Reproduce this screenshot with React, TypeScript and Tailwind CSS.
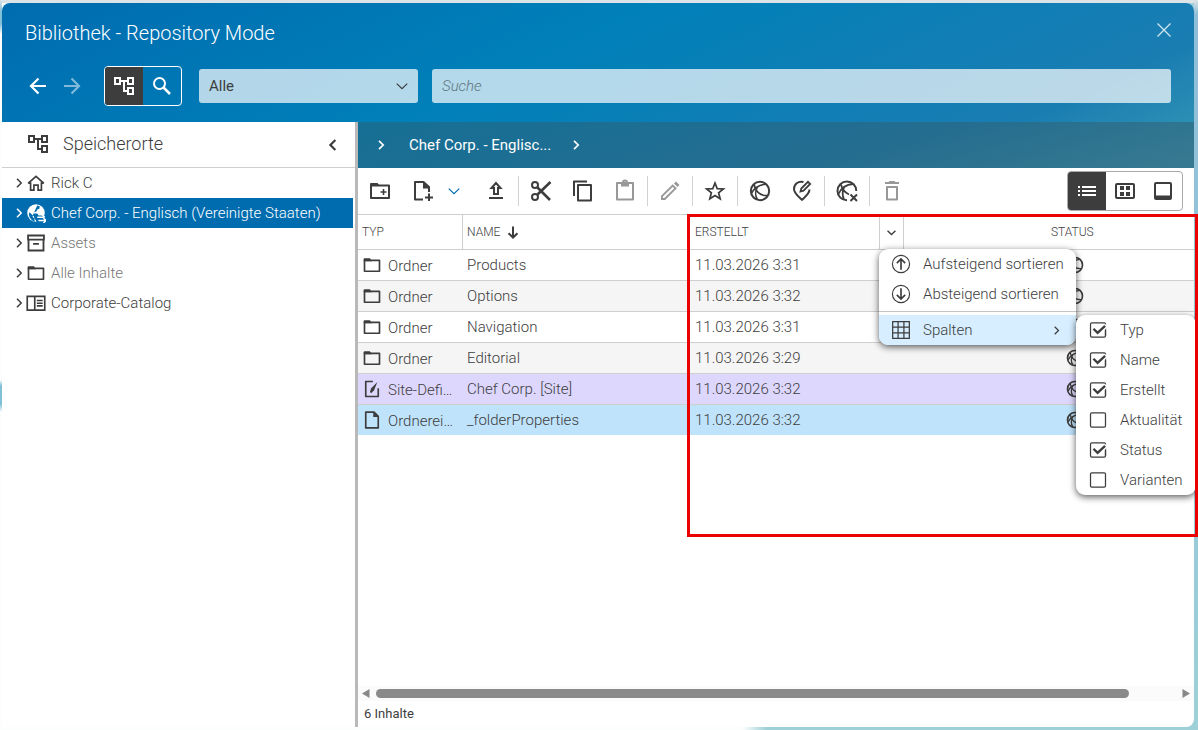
import React from "react";

type P = { className?: string };

const Svg = ({ className = "", size = 24, children }: P & { size?: number; children: React.ReactNode }) => (
  <svg width={size} height={size} viewBox="0 0 24 24" fill="none" stroke="currentColor" strokeWidth="2" className={"shrink-0 " + className}>
    {children}
  </svg>
);

const Tree = ({ className }: P) => (
  <Svg className={className}>
    <path d="M3 4h5v6H3zM16 4h5v6h-5zM16 14h5v6h-5zM8 7h8M12 7v10h4" />
  </Svg>
);
const Chevron = ({ className, size = 8, dir = "right", w = 1.8 }: P & { size?: number; dir?: "right" | "left" | "down"; w?: number }) => (
  <svg width={size} height={size} viewBox="0 0 10 10" fill="none" stroke="currentColor" strokeWidth={w} className={"shrink-0 " + (className ?? "")}>
    <path d={dir === "right" ? "M3 .8 7.2 5 3 9.2" : dir === "left" ? "M7 .8 2.8 5 7 9.2" : "M.6 3 5 7.2 9.4 3"} />
  </svg>
);
const Folder = ({ className, size }: P & { size?: number }) => (
  <Svg className={className} size={size}>
    <path d="M3 6.5h18v13H3z" strokeLinejoin="round" />
    <path d="M2 7.500V5a1 1 0 0 1 1-1h6.500l2.500 3.500z" fill="currentColor" stroke="none" />
  </Svg>
);
const Globe = ({ className, size }: P & { size?: number }) => (
  <Svg className={className} size={size}>
    <circle cx="12" cy="12" r="10" strokeWidth="2.200" />
    <path d="M18.500 4.500C11 5 5.500 9 2.500 15M5.500 4.500C6.500 12 12 17.500 20.500 17M9 8C7 11.500 6.500 17 9 21" strokeWidth="1.800" />
  </Svg>
);

const Divider = () => <span className="h-[30px] w-px bg-[#d2d2d2]" />;

function Header() {
  return (
    <header className="h-[119px] shrink-0 bg-[linear-gradient(155deg,#006cb0_0%,#0080b9_45%,#1a7db2_88%,#2c8fb3_100%)] text-white">
      <div className="flex h-[60px] items-center justify-between pr-[23px] pl-[23px]">
        <h1 className="text-[20px] font-light">Bibliothek - Repository Mode</h1>
        <svg width="14" height="14" viewBox="0 0 14 14" stroke="currentColor" strokeWidth="1.300" className="-mt-1.5 opacity-80">
          <path d="M.5.5l13 13M13.500.5l-13 13" />
        </svg>
      </div>
      <div className="flex h-[46px] items-center pl-[24px]">
        <Svg><path d="M20 12H6M12.500 4.500 5 12l7.500 7.500" strokeWidth="2.200" /></Svg>
        <Svg className="ml-[10px] opacity-50"><path d="M4 12h14M11.500 4.500 19 12l-7.500 7.500" strokeWidth="2.200" /></Svg>
        <div className="ml-[20px] flex h-10 w-[78px] overflow-hidden rounded border border-white">
          <span className="flex w-[38px] items-center justify-center bg-[#3d3d3d]"><Tree /></span>
          <span className="flex flex-1 items-center justify-center pr-px">
            <Svg><circle cx="9.500" cy="9.500" r="5.500" /><path d="m13.500 13.500 6.500 6.500" strokeWidth="2.500" /></Svg>
          </span>
        </div>
        <div className="ml-[17px] flex h-[34px] w-[219px] items-center justify-between rounded-[3px] bg-white/70 pr-2.5 pl-2.5 text-[15px] text-[#3d3d3d]">
          <span>Alle</span>
          <Chevron dir="down" size={12} w={1} />
        </div>
        <div className="ml-[14px] flex h-[34px] w-[739px] items-center rounded-[3px] bg-white/70 pl-2.5 text-[15px] font-light text-[#5f7480] italic">Suche</div>
      </div>
    </header>
  );
}

const tree = [
  { label: "Rick C", icon: "home", muted: false },
  { label: "Chef Corp. - Englisch (Vereinigte Staaten)", icon: "site", muted: false },
  { label: "Assets", icon: "box", muted: true },
  { label: "Alle Inhalte", icon: "folder", muted: true },
  { label: "Corporate-Catalog", icon: "catalog", muted: false },
];

function TreeIcon({ name }: { name: string }) {
  if (name === "folder") return <Folder size={20} />;
  if (name === "home")
    return <Svg size={20}><path d="M2.500 12.500 12 4l9.500 8.500M5.500 11v9.500h4v-6h5v6h4V11" /></Svg>;
  if (name === "box")
    return <Svg size={20}><path d="M3 8v13h18V8M2.500 3h19v5h-19zM8.500 13h7" strokeWidth="2.200" /></Svg>;
  if (name === "catalog")
    return <Svg size={20}><path d="M1.500 4h21v16.500h-21zM10.500 4V20M13 9h7M13 12.300h7M13 15.500h7" /></Svg>;
  return (
    <Svg size={20}>
      <circle cx="12" cy="12" r="10.500" fill="currentColor" stroke="none" />
      <path d="M13.500 3l3 .8-.5 3-2.500 1-1 2.500-3 .8-.5 1.400h4.500l1.500 2.500H24V24H13l-1-3-2-2.500-.5-2.500-5.500-5-.5 3 1 3.500 3 3.500 3 1.500-.5-3.500-2-2.500V15z" fill="#006cb0" stroke="none" />
      <path d="M13.500 17H22M19.500 14l3 3M24 21h-9M21 18l3 3-3 3" strokeWidth="1.700" />
    </Svg>
  );
}

function Sidebar() {
  return (
    <aside className="flex w-[353px] shrink-0 flex-col text-[#3d3d3d]">
      <div className="flex h-[46px] items-center border-b border-[#cfcfcf] pr-[16px] pl-[24px]">
        <Tree className="-mt-0.5" />
        <span className="-mt-0.5 ml-[13px] text-[18px] font-light">Speicherorte</span>
        <Chevron dir="left" size={12} w={1.8} className="ml-auto" />
      </div>
      <ul>
        {tree.map((t, i) => (
          <li key={t.label} className={"flex h-[30px] w-[351px] items-center pl-[12px] text-[15px] font-light whitespace-nowrap " + (i === 1 ? "bg-[#006cb0] text-white" : "")}>
            <Chevron size={10} w={1.5} />
            <span className="flex w-[24px] justify-center"><TreeIcon name={t.icon} /></span>
            <span className={"ml-[3px] " + (t.muted ? "text-[#777]" : "")}>{t.label}</span>
          </li>
        ))}
      </ul>
    </aside>
  );
}

function Toolbar() {
  return (
    <div className="flex h-[47px] shrink-0 items-center border-b border-[#cfcfcf] text-[#3d3d3d]">
      <Svg className="ml-[10px]">
        <path d="M3 6.500h18v12.500H3z" strokeLinejoin="round" /><path d="M2 7V5a1 1 0 0 1 1-1h6.500L12 7z" fill="currentColor" stroke="none" />
        <path d="M12.500 13h6M15.500 10v6" strokeWidth="1.600" />
      </Svg>
      <Svg className="ml-[19px]">
        <path d="M12 20.500H4V3h8.500L18 8V13M18 14.500v7.500M14 18.500h8" strokeLinejoin="round" /><path d="M12 3l6.500 6.500H12z" fill="currentColor" stroke="none" />
      </Svg>
      <Chevron dir="down" size={12} w={1} className="ml-[13px] text-[#006cb0]" />
      <Svg className="ml-[24px]"><path d="M5 19h14M12 4 7.500 9H10v6h4V9h2.500z" /></Svg>
      <span className="w-[10px]" /><Divider />
      <Svg className="ml-[10px]">
        <circle cx="6" cy="6" r="3" /><circle cx="6" cy="18" r="3" />
        <path d="M8.500 8.500 21 21M8.500 15.500 21.500 3" strokeWidth="2.600" />
      </Svg>
      <Svg className="ml-[18px]"><path d="M7 6h13v15.500H7zM3 17V2.500h13" strokeLinejoin="round" /></Svg>
      <Svg className="ml-[18px] text-[#989898]">
        <path d="M4 4h16v16.500H4z" strokeLinejoin="round" /><path d="M8 3.500h8v4H8z" fill="currentColor" stroke="none" /><path d="M10 3.500a2 2 0 0 1 4 0" />
      </Svg>
      <span className="w-[10px]" /><Divider />
      <Svg className="ml-[10px] text-[#989898]"><path d="M4 17.200 14.700 6.500l2.800 2.800L6.800 20H4z" strokeWidth="1.900" /><path d="m16 4.500 2-2 3.500 3.500-2 2z" fill="currentColor" stroke="none" /></Svg>
      <span className="w-[10px]" /><Divider />
      <Svg className="ml-[10px]"><path d="m12 4 2.200 5.600 6.200.4-4.800 3.800 1.600 6L12 16.500l-5.200 3.300 1.600-6L3.600 10l6.200-.4z" strokeWidth="1.700" /></Svg>
      <span className="w-[10px]" /><Divider />
      <Globe className="ml-[11px]" size={22} />
      <Svg className="ml-[19px]">
        <path d="M13.500 3C8 1.500 4 5.500 4 10c0 4.500 4 7 8 10.800 4-3.800 7.500-6.300 7.500-10.300" /><path d="m10.500 12.500.8-3L18 2.800l2.200 2.200-6.700 6.700z" strokeWidth="1.800" />
      </Svg>
      <span className="w-[10px]" /><Divider />
      <Svg className="ml-[10px]">
        <path d="M12 21.300A9.400 9.400 0 1 1 21.300 12" /><path d="M18 5C11 5.500 6 9.500 3.500 15M6 5.500C7 10 9 13 14 15.500M9 8.500C7.500 11.500 7 17 9 20" strokeWidth="1.800" /><path d="m15.500 15.500 6.500 6.500M22 15.500 15.500 22" />
      </Svg>
      <span className="w-[10px]" /><Divider />
      <Svg className="ml-[10px] text-[#989898]"><path d="M5 4h14M9 4l1-1h4l1 1M7 8h10v12.500H7z" strokeLinejoin="round" /></Svg>
      <div className="mr-[11px] ml-auto flex h-10 w-[116px] overflow-hidden rounded border border-[#a9a9a9]">
        <span className="flex w-[38px] items-center justify-center bg-[#3d3d3d] text-white">
          <Svg><path d="M3 8h2M7 8h14M3 12h2M7 12h14M3 16h2M7 16h14" /></Svg>
        </span>
        <span className="flex w-[38px] items-center justify-center">
          <Svg><rect x="3" y="5" width="18" height="14" rx="1" /><path d="M7 7h4v4H7zM13 7h4v4h-4zM7 13h4v4H7zM13 13h4v4h-4z" fill="currentColor" stroke="none" /></Svg>
        </span>
        <span className="flex w-[38px] items-center justify-center">
          <Svg><rect x="4" y="4" width="16" height="16" rx="1" /><path d="M4 16.500h16V20H4z" fill="currentColor" stroke="none" /></Svg>
        </span>
      </div>
    </div>
  );
}

const rows = [
  { type: "Ordner", name: "Products", date: "11.03.2026 3:31", bg: "bg-white" },
  { type: "Ordner", name: "Options", date: "11.03.2026 3:32", bg: "bg-[#f5f5f5]" },
  { type: "Ordner", name: "Navigation", date: "11.03.2026 3:31", bg: "bg-white" },
  { type: "Ordner", name: "Editorial", date: "11.03.2026 3:29", bg: "bg-[#f5f5f5]" },
  { type: "Site-Defi…", name: "Chef Corp. [Site]", date: "11.03.2026 3:32", bg: "bg-[#ded7fd]" },
  { type: "Ordnerei…", name: "_folderProperties", date: "11.03.2026 3:32", bg: "bg-[#bfe3fb]" },
];

function RowIcon({ i }: { i: number }) {
  if (i < 4) return <Folder size={20} />;
  if (i === 4)
    return <Svg size={20}><path d="M13 3H4.500v18h15V11" strokeLinejoin="round" /><path d="m18.500 3.500-4 10-3.500 3.500-1.500-1.500 1.500-4.500z" fill="currentColor" stroke="none" /></Svg>;
  return <Svg size={20}><path d="M4.500 2.500h10l5 5v14h-15z" strokeLinejoin="round" /><path d="M13.500 2 20 8.500h-6.500z" fill="currentColor" stroke="none" /></Svg>;
}

function Table() {
  return (
    <div className="flex-1 text-[#3d3d3d]">
      <div className="flex h-[35px] items-center border-b border-[#cfcfcf] text-[12px] font-light">
        <span className="flex h-full w-[105px] items-center border-r border-[#cfcfcf] pl-1 ">TYP</span>
        <span className="flex h-full w-[225px] items-center pl-1">NAME
          <svg width="12" height="13" viewBox="0 0 12 13" fill="none" stroke="currentColor" strokeWidth="2" className="ml-[7px]"><path d="M6 .5v11M1.500 7.200 6 11.500l4.500-4.300" /></svg>
        </span>
        <span className="flex h-full w-[192px] items-center border-r border-[#cfcfcf] pl-[7px]">ERSTELLT</span>
        <span className="flex h-full w-[24px] items-center justify-center border-r border-[#cfcfcf]"><Chevron dir="down" size={9} w={1.500} /></span>
        <span className="flex-1 pl-[147px]">STATUS</span>
      </div>
      {rows.map((r, i) => (
        <div key={r.name} className={"flex items-center text-[15px] font-light whitespace-nowrap " + r.bg + (i < 5 ? " h-[31px] border-b border-[#cfcfcf]" : " h-[30px]")}>
          <span className="flex w-[105px] items-center pl-1"><RowIcon i={i} /><span className="relative top-px ml-[6px]">{r.type}</span></span>
          <span className="w-[228px] pl-1">{r.name}</span>
          <span className="w-[375px] pl-1">{r.date}</span>
          <Globe size={18} />
        </div>
      ))}
    </div>
  );
}

function SortIcon({ down }: { down?: boolean }) {
  return <Svg size={20}><circle cx="12" cy="12" r="10.300" strokeWidth="1.400" /><path d={down ? "M12 5v13M7 13l5 5 5-5" : "M12 19V6M7 11l5-5 5 5"} /></Svg>;
}

function Menus() {
  const options = [["Typ", true], ["Name", true], ["Erstellt", true], ["Aktualität", false], ["Status", true], ["Varianten", false]] as const;
  const shadow = "shadow-[0_2px_7px_rgba(0,0,0,0.65)]";
  return (
    <>
      <div className={"absolute top-[249px] left-[879px] h-[96px] w-[197px] overflow-hidden rounded-[9px] bg-white text-[15px] font-light text-[#3d3d3d] " + shadow}>
        <div className="flex h-[30px] items-center gap-3 pl-3"><SortIcon /><span>Aufsteigend sortieren</span></div>
        <div className="flex h-[30px] items-center gap-3 pl-3"><SortIcon down /><span>Absteigend sortieren</span></div>
        <div className="mt-[2px] h-px bg-[#c4c4c4]" />
        <div className="mt-[3px] flex h-[30px] items-center gap-3 bg-[#d6eeff] pr-[15px] pl-3">
          <Svg size={20}><path d="M2 2h20v20H2zM8.500 2v20M15.500 2v20M2 8.500h20M2 15.500h20" strokeWidth="1.500" /></Svg>
          <span>Spalten</span><Chevron size={9} w={1.400} className="ml-auto" />
        </div>
      </div>
      <div className={"absolute top-[315px] left-[1076px] w-[120px] rounded-[9px] bg-white text-[15px] font-light text-[#3d3d3d] " + shadow}>
        {options.map(([label, on]) => (
          <div key={label} className="flex h-[30px] items-center gap-3 pl-3">
            <Svg size={20}>
              <rect x="3" y="3.500" width="18" height="17" rx="1.500" strokeWidth="1.500" />
              {on && <><path d="M16 13 22 6" stroke="white" strokeWidth="5" /><path d="m6.500 10.500 5 5L20.500 7" strokeWidth="2.800" /><path d="M21 12v7" strokeWidth="1.500" /></>}
            </Svg>
            <span>{label}</span>
          </div>
        ))}
      </div>
      <div className="pointer-events-none absolute top-[214px] left-[687px] h-[323px] w-[511px] border-[3px] border-[#eb0000]" />
    </>
  );
}

export default function App() {
  return (
    <div className="relative flex h-[730px] w-[1198px] overflow-hidden bg-[linear-gradient(90deg,#fcfdfd_62%,#9ed0d7_64%)] font-['Roboto',sans-serif]">
      <div className="h-full w-full bg-[linear-gradient(#dde4e8_3px,transparent_3px)]">
        <div className="h-full w-full bg-[linear-gradient(#dde4e8,#7fbfd8_12px,#7fbfd8_24px,#fcfdfd_34px,#fcfdfd_380px,#7fbfd8_386px,#7fbfd8_404px,#fcfdfd_412px)] bg-[length:2px_100%] bg-no-repeat">
          <div className="h-full w-full bg-[linear-gradient(#dde4e8,#8fbfd8_14px,#94c5d9_50%,#9ed0d7)] bg-[length:4px_100%] bg-right bg-no-repeat pt-[3px] pl-[2px]">
            <main className="flex h-[724px] w-[1192px] flex-col overflow-hidden rounded-lg rounded-bl-none bg-white">
              <Header />
              <div className="flex min-h-0 flex-1">
                <Sidebar />
                <section className="flex min-w-0 flex-1 flex-col border-l-[3px] border-[#b9b9b9]">
                  <div className="flex h-[46px] shrink-0 items-center bg-[linear-gradient(165deg,#166f95,#246d90_60%,#387a90)] pl-[18px] text-[15px] text-white">
                    <Chevron size={10} w={1.700} /><span className="mr-[20px] ml-[23px]">Chef Corp. - Englisc...</span><Chevron size={10} w={1.700} />
                  </div>
                  <Toolbar />
                  <Table />
                  <div className="flex h-[15px] items-center bg-[#fbfbfb] pr-[4px] pl-[4px]">
                    <svg width="8" height="9" viewBox="0 0 8 9"><path d="M7.500 0v9L0 4.500z" fill="#888" /></svg>
                    <span className="ml-[6px] h-[9px] w-[753px] rounded-full bg-[#8a8a8a]" />
                    <svg width="8" height="9" viewBox="0 0 8 9" className="ml-auto"><path d="M.5 0v9L8 4.500z" fill="#888" /></svg>
                  </div>
                  <div className="h-[26px] shrink-0 pt-[3px] pl-[6px] text-[13px] text-[#3d3d3d]">6 Inhalte</div>
                </section>
              </div>
            </main>
          </div>
        </div>
      </div>
      <Menus />
    </div>
  );
}
